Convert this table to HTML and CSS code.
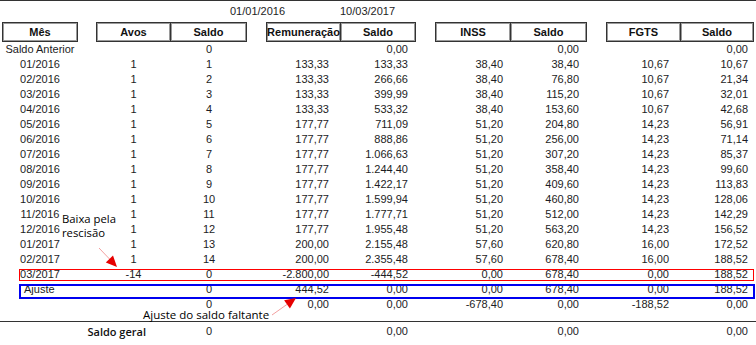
FILE: index.html
```html
<!DOCTYPE html>
<html lang="pt-BR">
<head>
  <meta charset="UTF-8" />
  <title>Saldo de provisões</title>
  <link rel="stylesheet" href="styles.css">
</head>
<body>
  <div class="dates"><span>01/01/2016</span><span>10/03/2017</span></div>

  <div class="row head">
    <span>Mês</span><span>Avos</span><span>Saldo</span><span>Remuneração</span><span>Saldo</span><span>INSS</span><span>Saldo</span><span>FGTS</span><span>Saldo</span>
  </div>

  <div class="row"><span>Saldo Anterior</span><span></span><span>0</span><span></span><span>0,00</span><span></span><span>0,00</span><span></span><span>0,00</span></div>
  <div class="row"><span>01/2016</span><span>1</span><span>1</span><span>133,33</span><span>133,33</span><span>38,40</span><span>38,40</span><span>10,67</span><span>10,67</span></div>
  <div class="row"><span>02/2016</span><span>1</span><span>2</span><span>133,33</span><span>266,66</span><span>38,40</span><span>76,80</span><span>10,67</span><span>21,34</span></div>
  <div class="row"><span>03/2016</span><span>1</span><span>3</span><span>133,33</span><span>399,99</span><span>38,40</span><span>115,20</span><span>10,67</span><span>32,01</span></div>
  <div class="row"><span>04/2016</span><span>1</span><span>4</span><span>133,33</span><span>533,32</span><span>38,40</span><span>153,60</span><span>10,67</span><span>42,68</span></div>
  <div class="row"><span>05/2016</span><span>1</span><span>5</span><span>177,77</span><span>711,09</span><span>51,20</span><span>204,80</span><span>14,23</span><span>56,91</span></div>
  <div class="row"><span>06/2016</span><span>1</span><span>6</span><span>177,77</span><span>888,86</span><span>51,20</span><span>256,00</span><span>14,23</span><span>71,14</span></div>
  <div class="row"><span>07/2016</span><span>1</span><span>7</span><span>177,77</span><span>1.066,63</span><span>51,20</span><span>307,20</span><span>14,23</span><span>85,37</span></div>
  <div class="row"><span>08/2016</span><span>1</span><span>8</span><span>177,77</span><span>1.244,40</span><span>51,20</span><span>358,40</span><span>14,23</span><span>99,60</span></div>
  <div class="row"><span>09/2016</span><span>1</span><span>9</span><span>177,77</span><span>1.422,17</span><span>51,20</span><span>409,60</span><span>14,23</span><span>113,83</span></div>
  <div class="row"><span>10/2016</span><span>1</span><span>10</span><span>177,77</span><span>1.599,94</span><span>51,20</span><span>460,80</span><span>14,23</span><span>128,06</span></div>
  <div class="row"><span>11/2016</span><span>1</span><span>11</span><span>177,77</span><span>1.777,71</span><span>51,20</span><span>512,00</span><span>14,23</span><span>142,29</span></div>
  <div class="row"><span>12/2016</span><span>1</span><span>12</span><span>177,77</span><span>1.955,48</span><span>51,20</span><span>563,20</span><span>14,23</span><span>156,52</span></div>
  <div class="row"><span>01/2017</span><span>1</span><span>13</span><span>200,00</span><span>2.155,48</span><span>57,60</span><span>620,80</span><span>16,00</span><span>172,52</span></div>
  <div class="row"><span>02/2017</span><span>1</span><span>14</span><span>200,00</span><span>2.355,48</span><span>57,60</span><span>678,40</span><span>16,00</span><span>188,52</span></div>
  <div class="row cut"><span>03/2017</span><span>-14</span><span>0</span><span>-2.800,00</span><span>-444,52</span><span>0,00</span><span>678,40</span><span>0,00</span><span>188,52</span></div>
  <div class="row adj"><span>Ajuste</span><span></span><span>0</span><span>444,52</span><span>0,00</span><span>0,00</span><span>678,40</span><span>0,00</span><span>188,52</span></div>
  <div class="row"><span></span><span></span><span>0</span><span>0,00</span><span>0,00</span><span>-678,40</span><span>0,00</span><span>-188,52</span><span>0,00</span></div>

  <div class="row total"><span></span><span class="label">Saldo geral</span><span>0</span><span></span><span>0,00</span><span></span><span>0,00</span><span></span><span>0,00</span></div>

  <!-- annotations -->
  <div class="note note-cut">Baixa pela<br>rescisão</div>
  <div class="note note-adj">Ajuste do saldo faltante</div>
  <svg class="arrows" width="756" height="345" viewBox="0 0 756 345">
    <line x1="99" y1="247" x2="110" y2="258.5" stroke="#f3a0a0" stroke-width="1" />
    <polygon points="117,266 105.8,261.4 113,254.6" fill="#e60000" />
    <line x1="272" y1="314" x2="287" y2="303.4" stroke="#f3a0a0" stroke-width="1" />
    <polygon points="296,297 289.9,307.5 284.1,299.3" fill="#e60000" />
  </svg>
</body>
</html>
```

FILE: styles.css
```css
html, body {
  margin: 0;
  padding: 0;
  background: #fff;
}
body {
  position: relative;
  font-family: "Liberation Sans", Arial, sans-serif;
  font-size: 11px;
  color: #1c1c24;
  border-top: 1px solid #333;
}
.dates {
  display: flex;
  height: 21px;
  line-height: 21px;
  padding-left: 230px;
}
.dates span:first-child {
  width: 110px;
}
.row {
  position: relative;
  display: grid;
  grid-template-columns: 76px 93px 76px 94px 75px 95px 76px 94px 73px;
  padding-left: 2px;
  height: 15px;
  line-height: 15px;
  white-space: nowrap;
}
.row > * {
  text-align: right;
}
.row > :nth-child(-n+3) {
  text-align: center;
}
.row > :nth-child(even) {
  margin-left: 19px;
}
.row > :nth-child(2) {
  margin-left: 18px;
}
.row > :nth-child(4),
.row > :nth-child(8) {
  padding-right: 12px;
}
.row > :nth-child(5),
.row > :nth-child(6),
.row > :nth-child(7) {
  padding-right: 8px;
}
.row > :nth-child(9) {
  padding-right: 6px;
}
.row.head {
  height: 20px;
  line-height: 18px;
}
.row.head > * {
  box-sizing: border-box;
  padding: 0;
  text-align: center;
  font-weight: bold;
  color: #111;
  border: 1px solid #333;
  box-shadow: inset 0 0 0 1px #9a9a9a;
}
.row.head > :nth-child(odd):not(:first-child) {
  border-left: none;
}
.row.cut::after,
.row.adj::after {
  content: "";
  position: absolute;
  left: 19px;
}
.row.cut::after {
  right: 2px;
  top: 2px;
  bottom: 1px;
  border: 1px solid #ff0000;
}
.row.adj::after {
  right: 1px;
  top: 2px;
  bottom: -2px;
  border: 2px solid #0000f0;
}
.row.adj > :first-child {
  text-align: left;
  padding-left: 22px;
}
.row.total {
  margin-top: 9px;
  border-top: 1px solid #333;
  height: 20px;
  line-height: 19px;
}
.row.total .label {
  margin-left: 0;
  padding-right: 25px;
  text-align: right;
  font-family: "Open Sans", sans-serif;
  font-size: 11px;
  font-weight: 600;
  color: #111;
}
.note {
  position: absolute;
  font-family: "Open Sans", sans-serif;
  color: #000;
  white-space: nowrap;
}
.note-cut {
  left: 62px;
  top: 211px;
  font-size: 11.3px;
  line-height: 14px;
}
.note-adj {
  left: 143px;
  top: 306px;
  font-size: 11.5px;
  line-height: 16px;
}
.arrows {
  position: absolute;
  top: 0;
  left: 0;
  pointer-events: none;
}
```
